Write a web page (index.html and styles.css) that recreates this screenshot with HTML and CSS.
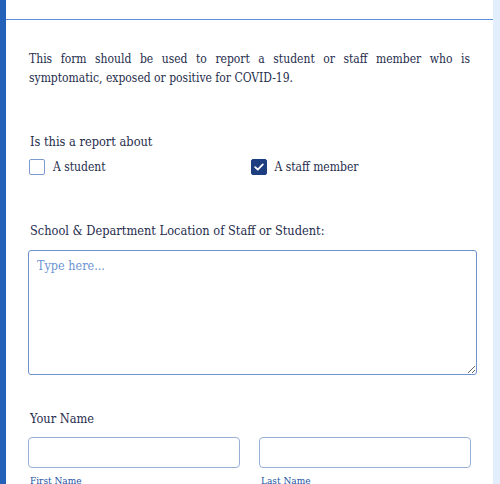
FILE: index.html
```html
<!DOCTYPE html>
<html lang="en">
  <head>
    <meta charset="utf-8" />
    <meta name="viewport" content="width=device-width, initial-scale=1" />
    <title>COVID-19 Report Form</title>

    <!-- CSS -->
    <link rel="stylesheet" href="styles.css">
  </head>

  <body>
    <div class="page">
      <main class="form-card">
        <div class="form-card__top"></div>

        <p class="intro">
          This form should be used to report a student or staff member who is symptomatic, exposed or positive for COVID-19.
        </p>

        <!-- Report type -->
        <fieldset class="field  field--choice">
          <legend class="field__label">Is this a report about</legend>
          <div class="choices">
            <label class="choice">
              <span class="choice__box"></span>
              <span class="choice__text">A student</span>
            </label>
            <label class="choice">
              <span class="choice__box  choice__box--checked">
                <svg width="10" height="8" viewBox="0 0 10 8"><path d="M1.2 4.2 L3.8 6.6 L8.8 1.4" fill="none" stroke="#fff" stroke-width="1.8" stroke-linecap="round" stroke-linejoin="round"/></svg>
              </span>
              <span class="choice__text">A staff member</span>
            </label>
          </div>
        </fieldset>

        <!-- Location -->
        <div class="field  field--location">
          <label class="field__label" for="location">School &amp; Department Location of Staff or Student:</label>
          <textarea class="textarea" id="location" placeholder="Type here..."></textarea>
        </div>

        <!-- Name -->
        <div class="field  field--name">
          <span class="field__label">Your Name</span>
          <div class="name-grid">
            <div class="name-grid__item">
              <input class="input" type="text" />
              <span class="sublabel">First Name</span>
            </div>
            <div class="name-grid__item">
              <input class="input" type="text" />
              <span class="sublabel">Last Name</span>
            </div>
          </div>
        </div>
      </main>
    </div>
  </body>
</html>
```

FILE: styles.css
```css
body {
  background: #e3eefd;
  color: #1f2d4d;
  font-family: 'DejaVu Serif Condensed', 'DejaVu Serif', serif;
  font-stretch: condensed;
  margin: 0;
}

.page {
  border-left: 6px solid #2462b9;
  height: 484px;
  overflow: hidden;
}

.form-card {
  background: #ffffff;
  width: 487px;
  min-height: 484px;
  box-sizing: border-box;
  padding: 0 22px 0 22px;
}

.form-card__top {
  height: 19px;
  border-bottom: 1px solid #5b8fd8;
  margin: 0 -22px;
}

.intro {
  font-size: 12px;
  line-height: 19px;
  text-align: justify;
  margin: 30px 0 0 1px;
  padding-right: 1px;
}

.field {
  border: 0;
  margin: 0;
  padding: 0;
}

.field__label {
  display: block;
  font-size: 12.7px;
  line-height: 20px;
  padding: 0 0 0 2px;
}

.field--choice {
  margin-top: 44px;
}

.choices {
  display: grid;
  grid-template-columns: 1fr 1fr;
  margin-top: 7px;
}

.choice {
  display: flex;
  align-items: center;
  gap: 8px;
  font-size: 12px;
  padding-left: 1px;
}

.choice__box {
  width: 14px;
  height: 14px;
  border: 1px solid #7b9bd0;
  border-radius: 2px;
  display: flex;
  align-items: center;
  justify-content: center;
}

.choice__box--checked {
  background: #1d3f80;
  border-color: #1d3f80;
}

.field--location {
  margin-top: 46px;
}

.textarea {
  display: block;
  width: 449px;
  height: 125px;
  box-sizing: border-box;
  margin-top: 9px;
  border: 1px solid #6d93cf;
  border-radius: 3px;
  padding: 7px 8px;
  font-family: 'DejaVu Serif Condensed', 'DejaVu Serif', serif;
  font-stretch: condensed;
  font-size: 12.5px;
  color: #1f2d4d;
  resize: vertical;
}

.textarea::placeholder {
  color: #6d95d2;
}

.field--name {
  margin-top: 34px;
}

.name-grid {
  display: grid;
  grid-template-columns: 212px 212px;
  column-gap: 19px;
  margin-top: 8px;
}

.input {
  display: block;
  width: 100%;
  height: 31px;
  box-sizing: border-box;
  border: 1px solid #98afd5;
  border-radius: 4px;
  margin: 0;
}

.sublabel {
  display: block;
  color: #2553a3;
  font-size: 10px;
  line-height: 14px;
  margin-top: 6px;
  padding-left: 2px;
}
```
